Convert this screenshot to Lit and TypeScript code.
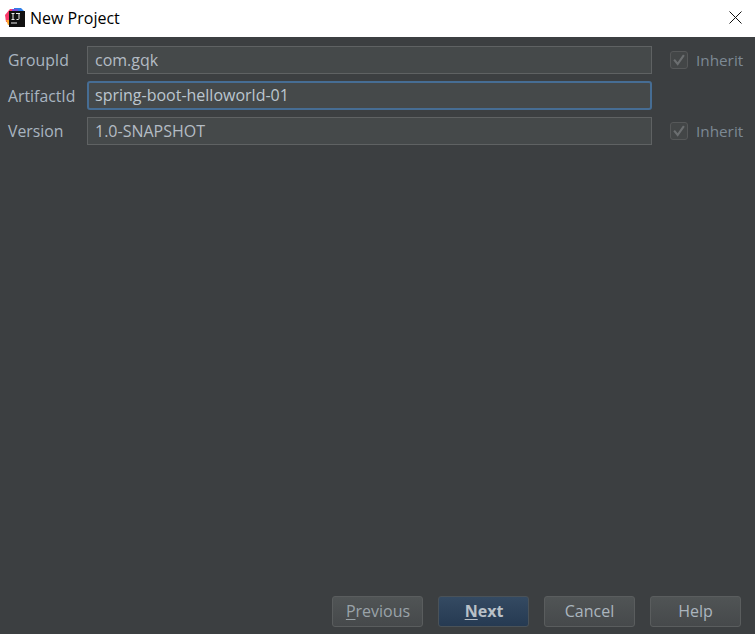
import { LitElement, html, css } from "lit";
import { customElement } from "lit/decorators.js";

@customElement("app-root")
export class AppRoot extends LitElement {
  static styles = css`
    :host { display: block; width: 755px; height: 634px; font-family: "Open Sans", "Noto Sans", sans-serif; }
    .win { display: flex; flex-direction: column; height: 634px; background: #3c3f41; }
    .title { height: 37px; flex: none; box-sizing: border-box; padding: 0 13px 2px 5px; background: #fff; display: flex; align-items: center; gap: 5px; color: #000; font-size: 16px; }
    .title span { flex: 1; }
    .title svg { display: block; }
    .form { flex: 1; display: grid; grid-template-columns: 79px 565px auto; grid-template-rows: 28px 29px 28px; row-gap: 7px; padding: 9px 0 0 8px; align-content: start; font-size: 16px; }
    .lbl { display: flex; align-items: center; color: #a9b5c0; font-size: 15.8px; }
    .field { box-sizing: border-box; border: 1px solid #5f6263; background: #45494a; color: #b4bcc4; padding: 0 0 1px 7px; display: flex; align-items: center; white-space: nowrap; }
    .field.focus { border: 2px solid #466d94; border-radius: 3px; padding-left: 6px; color: #bcc6cf; }
    .inh { display: flex; align-items: center; padding-left: 18px; gap: 8px; color: #7c8994; font-size: 15.3px; }
    .cb { width: 18px; height: 18px; flex: none; box-sizing: border-box; border: 1px solid #565859; border-radius: 3px; background: #434647; display: block; }
    .btns { flex: none; display: flex; justify-content: flex-end; gap: 15px; padding: 0 14px 7px 0; }
    .btn { box-sizing: border-box; width: 91px; height: 31px; padding-bottom: 2px; border: 1px solid #5a5d5e; border-radius: 3px; background: linear-gradient(#505455, #46494b); color: #abb5be; font-size: 16px; display: flex; align-items: center; justify-content: center; }
    .btn.dis { color: #9aa3a9; }
    .btn.def { background: linear-gradient(#344a62, #263a52); border-color: #4a5258; color: #b9c1c8; font-weight: 700; }
    .btn span { padding-left: 1px; }
    u { text-underline-offset: 2px; }
  `;

  private cb() {
    return html`<svg class="cb" viewBox="0 0 18 18" fill="none"><path d="M3.5 8.5 7.5 13.5 14.5 3.5" stroke="#6b6e70" stroke-width="2.4"/></svg>`;
  }

  render() {
    return html`<div class="win">
      <div class="title">
        <svg width="20" height="20" viewBox="0 0 20 20">
          <path d="M0 7 5 1h6L5 14H1z" fill="#fb3a6b"/>
          <path d="M9 0h7l4 4v6H9z" fill="#2f7fe8"/>
          <path d="M7 1h6v3H7z" fill="#7a4fd8"/>
          <path d="M1 12h5v5H3z" fill="#ffa82e"/>
          <rect x="4" y="3" width="16" height="16" fill="#111"/>
          <rect x="6" y="14.5" width="6" height="1" fill="#eee"/>
          <path d="M6.5 5.5h3M8 5.5v6M6.5 11.5h3M11 5.5h4M14 5.5v5.2q0 .8-.9.8h-1.6" fill="none" stroke="#eee"/>
        </svg>
        <span>New Project</span>
        <svg width="13" height="13" viewBox="0 0 13 13"><path d="M.5.5l12 12M12.5.5l-12 12" stroke="#111" fill="none"/></svg>
      </div>
      <div class="form">
        <div class="lbl">GroupId</div><div class="field">com.gqk</div>
        <div class="inh">${this.cb()}<span>Inherit</span></div>
        <div class="lbl">ArtifactId</div><div class="field focus">spring-boot-helloworld-01</div><div></div>
        <div class="lbl">Version</div><div class="field">1.0-SNAPSHOT</div>
        <div class="inh">${this.cb()}<span>Inherit</span></div>
      </div>
      <div class="btns">
        <div class="btn dis"><span><u>P</u>revious</span></div>
        <div class="btn def"><span><u>N</u>ext</span></div>
        <div class="btn">Cancel</div>
        <div class="btn">Help</div>
      </div>
    </div>`;
  }
}
